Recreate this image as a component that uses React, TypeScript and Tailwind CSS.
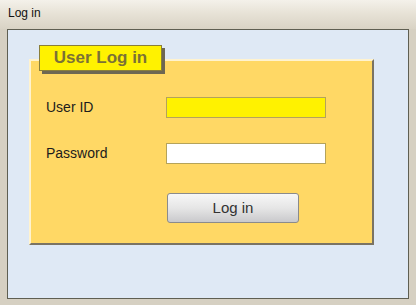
export default function App() {
  return (
    <div className="w-[416px] h-[305px] flex flex-col bg-[#d6d0c2] font-['Liberation_Sans',Arial,sans-serif] overflow-hidden">
      <div className="h-[29px] flex items-center pl-[8px] pb-[3px] bg-gradient-to-b from-[#f4f1ea] via-[#e6e1d5] to-[#d9d3c5] text-[12px] text-[#111]">
        Log in
      </div>
      <div className="flex-1 mx-[7px] mb-[6px] border border-[#5f5f52] bg-[#dfe9f5] pt-[29px] pl-[21px]">
        <div className="relative w-[345px] h-[186px] bg-[#ffd865] border-2 border-t-[#fff3cf] border-l-[#fff3cf] border-r-[#7a7363] border-b-[#7a7363] pl-[15px] pt-[36px]">
          <div className="absolute left-[8px] top-[-16px] w-[123px] h-[26px] bg-[#fff200] border border-[#8a7f3a] shadow-[3px_3px_0_#6e6752] flex items-center justify-center text-[17px] font-bold text-[#7b7136]">
            User Log in
          </div>
          <div className="grid grid-cols-[120px_160px] items-center gap-y-[25px] text-[14px] text-[#1c1c1c]">
            <span>User ID</span>
            <div className="h-[21px] bg-[#fff200] border border-[#b5a35a]" />
            <span>Password</span>
            <div className="h-[21px] bg-white border border-[#b5a35a]" />
            <span />
            <button className="mt-[4px] ml-[1px] w-[132px] h-[30px] rounded-[3px] border border-[#8b8b8b] bg-gradient-to-b from-[#f7f7f7] via-[#e6e6e6] to-[#c9c9cc] text-[15px] text-[#333]">
              Log in
            </button>
          </div>
        </div>
      </div>
    </div>
  )
}
